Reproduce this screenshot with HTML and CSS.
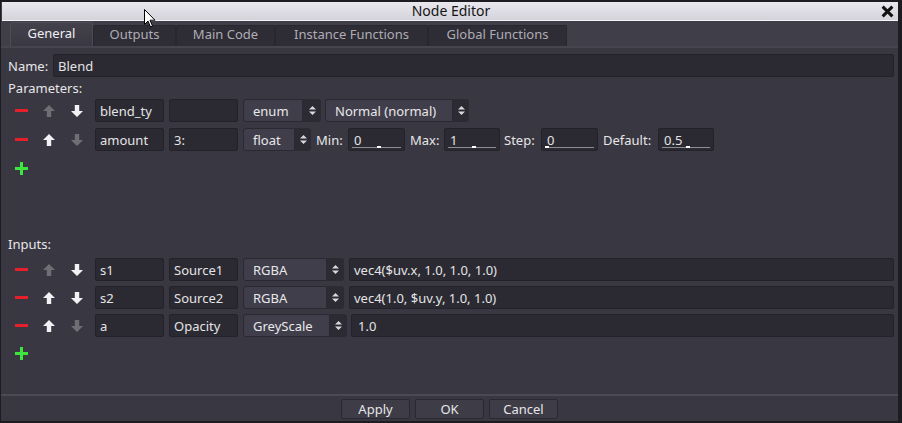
FILE: index.html
```html
<!DOCTYPE html>
<html>
<head>
<meta charset="utf-8">
<link rel="stylesheet" href="styles.css">
</head>
<body>
<svg width="0" height="0" class="defs">
  <defs>
    <symbol id="up" viewBox="0 0 12 12"><path d="M6 0 L12 6 L8.2 6 L8.2 12 L3.8 12 L3.8 6 L0 6 Z"/></symbol>
    <symbol id="down" viewBox="0 0 12 12"><path d="M6 12 L12 6 L8.2 6 L8.2 0 L3.8 0 L3.8 6 L0 6 Z"/></symbol>
    <symbol id="updown" viewBox="0 0 7 9"><path d="M3.5 0 L7 3.5 L0 3.5 Z M3.5 9 L7 5.5 L0 5.5 Z"/></symbol>
  </defs>
</svg>
<div class="window">
  <div class="titlebar">
    <span class="title">Node Editor</span>
    <svg class="close" viewBox="0 0 12 12" width="13" height="13"><path d="M1.5 1.5 L10.5 10.5 M10.5 1.5 L1.5 10.5"/></svg>
  </div>
  <div class="tabs">
    <div class="tab active w-general">General</div>
    <div class="tab w-outputs">Outputs</div>
    <div class="tab w-main">Main Code</div>
    <div class="tab w-instance">Instance Functions</div>
    <div class="tab w-global">Global Functions</div>
  </div>
  <div class="panel">
    <div class="name-row">
      <span class="name-label">Name:</span>
      <div class="field grow">Blend</div>
    </div>
    <div class="section-label">Parameters:</div>
    <div class="prow">
      <span class="cell"><span class="minus"></span></span>
      <span class="cell"><svg class="arr off"><use href="#up"/></svg></span>
      <span class="cell"><svg class="arr"><use href="#down"/></svg></span>
      <div class="field w69">blend_ty</div>
      <div class="field w69"></div>
      <div class="select"><div class="sel-body w60">enum</div><div class="sel-arrow w18"><svg class="ud"><use href="#updown"/></svg></div></div>
      <div class="select sel-gap"><div class="sel-body w128">Normal (normal)</div><div class="sel-arrow w16"><svg class="ud"><use href="#updown"/></svg></div></div>
    </div>
    <div class="prow">
      <span class="cell"><span class="minus"></span></span>
      <span class="cell"><svg class="arr"><use href="#up"/></svg></span>
      <span class="cell"><svg class="arr off"><use href="#down"/></svg></span>
      <div class="field w69">amount</div>
      <div class="field w69">3:</div>
      <div class="select"><div class="sel-body w52">float</div><div class="sel-arrow w16"><svg class="ud"><use href="#updown"/></svg></div></div>
      <span class="plabel l-min">Min:</span>
      <div class="field spin w57">0<span class="track"><span class="tick" style="left:50%"></span></span></div>
      <span class="plabel l-max">Max:</span>
      <div class="field spin w56">1<span class="track"><span class="tick" style="left:50%"></span></span></div>
      <span class="plabel l-step">Step:</span>
      <div class="field spin w57">0<span class="track"><span class="tick" style="left:0%"></span></span></div>
      <span class="plabel l-def">Default:</span>
      <div class="field spin w56">0.5<span class="track"><span class="tick" style="left:50%"></span></span></div>
    </div>
    <div class="prow add"><span class="cell"><span class="plus"></span></span></div>
    <div class="section-label inputs-label">Inputs:</div>
    <div class="irows">
      <div class="irow">
        <span class="cell"><span class="minus"></span></span>
        <span class="cell"><svg class="arr off"><use href="#up"/></svg></span>
        <span class="cell"><svg class="arr"><use href="#down"/></svg></span>
        <div class="field w69">s1</div>
        <div class="field w69">Source1</div>
        <div class="select"><div class="sel-body w84">RGBA</div><div class="sel-arrow w17"><svg class="ud"><use href="#updown"/></svg></div></div>
        <div class="field grow val">vec4($uv.x, 1.0, 1.0, 1.0)</div>
      </div>
      <div class="irow">
        <span class="cell"><span class="minus"></span></span>
        <span class="cell"><svg class="arr"><use href="#up"/></svg></span>
        <span class="cell"><svg class="arr"><use href="#down"/></svg></span>
        <div class="field w69">s2</div>
        <div class="field w69">Source2</div>
        <div class="select"><div class="sel-body w84">RGBA</div><div class="sel-arrow w17"><svg class="ud"><use href="#updown"/></svg></div></div>
        <div class="field grow val">vec4(1.0, $uv.y, 1.0, 1.0)</div>
      </div>
      <div class="irow">
        <span class="cell"><span class="minus"></span></span>
        <span class="cell"><svg class="arr"><use href="#up"/></svg></span>
        <span class="cell"><svg class="arr off"><use href="#down"/></svg></span>
        <div class="field w69">a</div>
        <div class="field w69">Opacity</div>
        <div class="select"><div class="sel-body w87">GreyScale</div><div class="sel-arrow w17"><svg class="ud"><use href="#updown"/></svg></div></div>
        <div class="field grow val val2">1.0</div>
      </div>
      <div class="irow add"><span class="cell"><span class="plus"></span></span></div>
    </div>
  </div>
  <div class="buttons">
    <div class="btn">Apply</div>
    <div class="btn">OK</div>
    <div class="btn">Cancel</div>
  </div>
</div>
<svg class="cursor" width="12" height="19" viewBox="0 0 12 19"><path d="M0.5 0.5 L0.5 15.5 L4 12 L6.5 18 L8.5 17 L6 11.2 L11 11.2 Z"/></svg>
</body>
</html>
```
FILE: styles.css
```css
html, body {
  margin: 0;
  padding: 0;
}
body {
  width: 902px;
  height: 423px;
  overflow: hidden;
  background: #1d1c21;
  font-family: "Noto Sans", "DejaVu Sans", sans-serif;
  font-size: 13px;
  color: #e6e6e8;
  position: relative;
}
.defs { position: absolute; }
.window {
  margin: 2px 0 0 1px;
  width: 897px;
  height: 419px;
  background: #403e49;
  display: flex;
  flex-direction: column;
}
.titlebar {
  height: 19px;
  box-sizing: border-box;
  background: linear-gradient(#e9e8ee, #d4d3db);
  border-bottom: 1px solid #f4f4f7;
  position: relative;
  display: flex;
  justify-content: center;
  align-items: center;
  margin-left: 1px;
}
.title {
  color: #151515;
  font-size: 14px;
  line-height: 18px;
  margin-left: 2px;
}
.close {
  position: absolute;
  right: 4px;
  top: 3px;
  stroke: #111;
  stroke-width: 2.8;
  fill: none;
}
.tabs {
  height: 25px;
  display: flex;
  align-items: flex-end;
  padding-left: 9px;
  box-sizing: border-box;
}
.tab {
  height: 21px;
  box-sizing: border-box;
  background: #2e2c35;
  border: 1px solid #28262e;
  border-bottom: none;
  color: #aeacb6;
  display: flex;
  align-items: center;
  justify-content: center;
  padding-bottom: 5px;
  border-radius: 2px 2px 0 0;
}
.tab.active {
  height: 24px;
  padding-bottom: 4px;
  background: linear-gradient(#43414c, #3a3843);
  border-color: #4d4b56;
  color: #efeff2;
}
.w-general { width: 83px; }
.w-outputs { width: 83px; }
.w-main { width: 99px; }
.w-instance { width: 153px; }
.w-global { width: 139px; }
.panel {
  height: 350px;
  box-sizing: border-box;
  background: #393741;
  border-top: 2px solid #46444f;
  border-bottom: 2px solid #4b4954;
  padding: 6px 4px 0 6px;
  display: flex;
  flex-direction: column;
}
.name-row {
  display: flex;
  height: 23px;
  align-items: center;
}
.name-label {
  width: 45px;
  padding-left: 1px;
}
.field {
  height: 23px;
  box-sizing: border-box;
  background: #2b2a32;
  border: 1px solid #23222a;
  border-radius: 2px;
  padding-left: 4px;
  display: flex;
  align-items: center;
  color: #e4e4e6;
  white-space: nowrap;
  overflow: hidden;
}
.grow { flex: 1; }
.section-label {
  height: 16px;
  line-height: 16px;
  margin-top: 3px;
  margin-bottom: 3px;
  padding-left: 1px;
}
.inputs-label {
  margin-top: 56px;
  margin-bottom: 6px;
}
.prow, .irow {
  display: flex;
  align-items: center;
  height: 23px;
  gap: 5px;
}
.prow { margin-bottom: 6px; }
.irows { display: flex; flex-direction: column; gap: 5px; }
.prow .cell, .irow .cell {
  width: 28px;
  margin-right: -5px;
  display: flex;
  justify-content: center;
  align-items: center;
}
.prow .cell:nth-child(3), .irow .cell:nth-child(3) { margin-right: -1px; }
.minus {
  width: 13px;
  height: 3px;
  background: #e5202a;
}
.plus {
  width: 13px;
  height: 13px;
  background:
    linear-gradient(#3ce63c, #3ce63c) center / 13px 3px no-repeat,
    linear-gradient(#3ce63c, #3ce63c) center / 3px 13px no-repeat;
}
.arr {
  width: 12px;
  height: 12px;
  fill: #f2f2f4;
}
.arr.off { fill: #6f6e75; }
.w69 { width: 69px; }
.w57 { width: 57px; }
.w56 { width: 56px; }
.select {
  display: flex;
  height: 23px;
}
.sel-gap { margin-left: -1px; }
.sel-body {
  box-sizing: border-box;
  height: 23px;
  background: #403e4a;
  border: 1px solid #2a2830;
  border-radius: 3px 0 0 3px;
  padding-left: 9px;
  display: flex;
  align-items: center;
  color: #e8e8ea;
}
.sel-arrow {
  height: 23px;
  background: #2c2a32;
  border-radius: 0 3px 3px 0;
  display: flex;
  align-items: center;
  justify-content: center;
}
.ud {
  width: 7px;
  height: 9px;
  fill: #d8d8dc;
}
.w60 { width: 60px; }
.w128 { width: 128px; }
.w52 { width: 52px; }
.w84 { width: 84px; }
.w87 { width: 87px; }
.w18 { width: 18px; }
.w17 { width: 17px; }
.w16 { width: 16px; }
.plabel { white-space: nowrap; }
.l-min { width: 27px; }
.l-max { width: 29px; }
.l-step { width: 32px; margin-left: -1px; }
.l-def { width: 50px; }
.spin {
  position: relative;
  padding-left: 5px;
}
.track {
  position: absolute;
  left: 3px;
  right: 3px;
  bottom: 2px;
  height: 1px;
  background: #8d8c93;
}
.tick {
  position: absolute;
  bottom: 0;
  width: 4px;
  height: 2px;
  background: #ffffff;
}
.val { padding-left: 4px; }
.val2 { margin-left: -1px; padding-left: 6px; }
.add { margin-bottom: 0; }
.buttons {
  flex: 1;
  display: flex;
  justify-content: center;
  align-items: flex-start;
  padding-top: 3px;
  gap: 5px;
  background: #393741;
}
.btn {
  width: 69px;
  height: 20px;
  box-sizing: border-box;
  background: #3e3c47;
  border: 1px solid #2a2830;
  border-radius: 2px;
  display: flex;
  align-items: center;
  justify-content: center;
  color: #e6e6e8;
}
.cursor {
  position: absolute;
  left: 144px;
  top: 9px;
  fill: #ffffff;
  stroke: #000;
  stroke-width: 1;
}
```
